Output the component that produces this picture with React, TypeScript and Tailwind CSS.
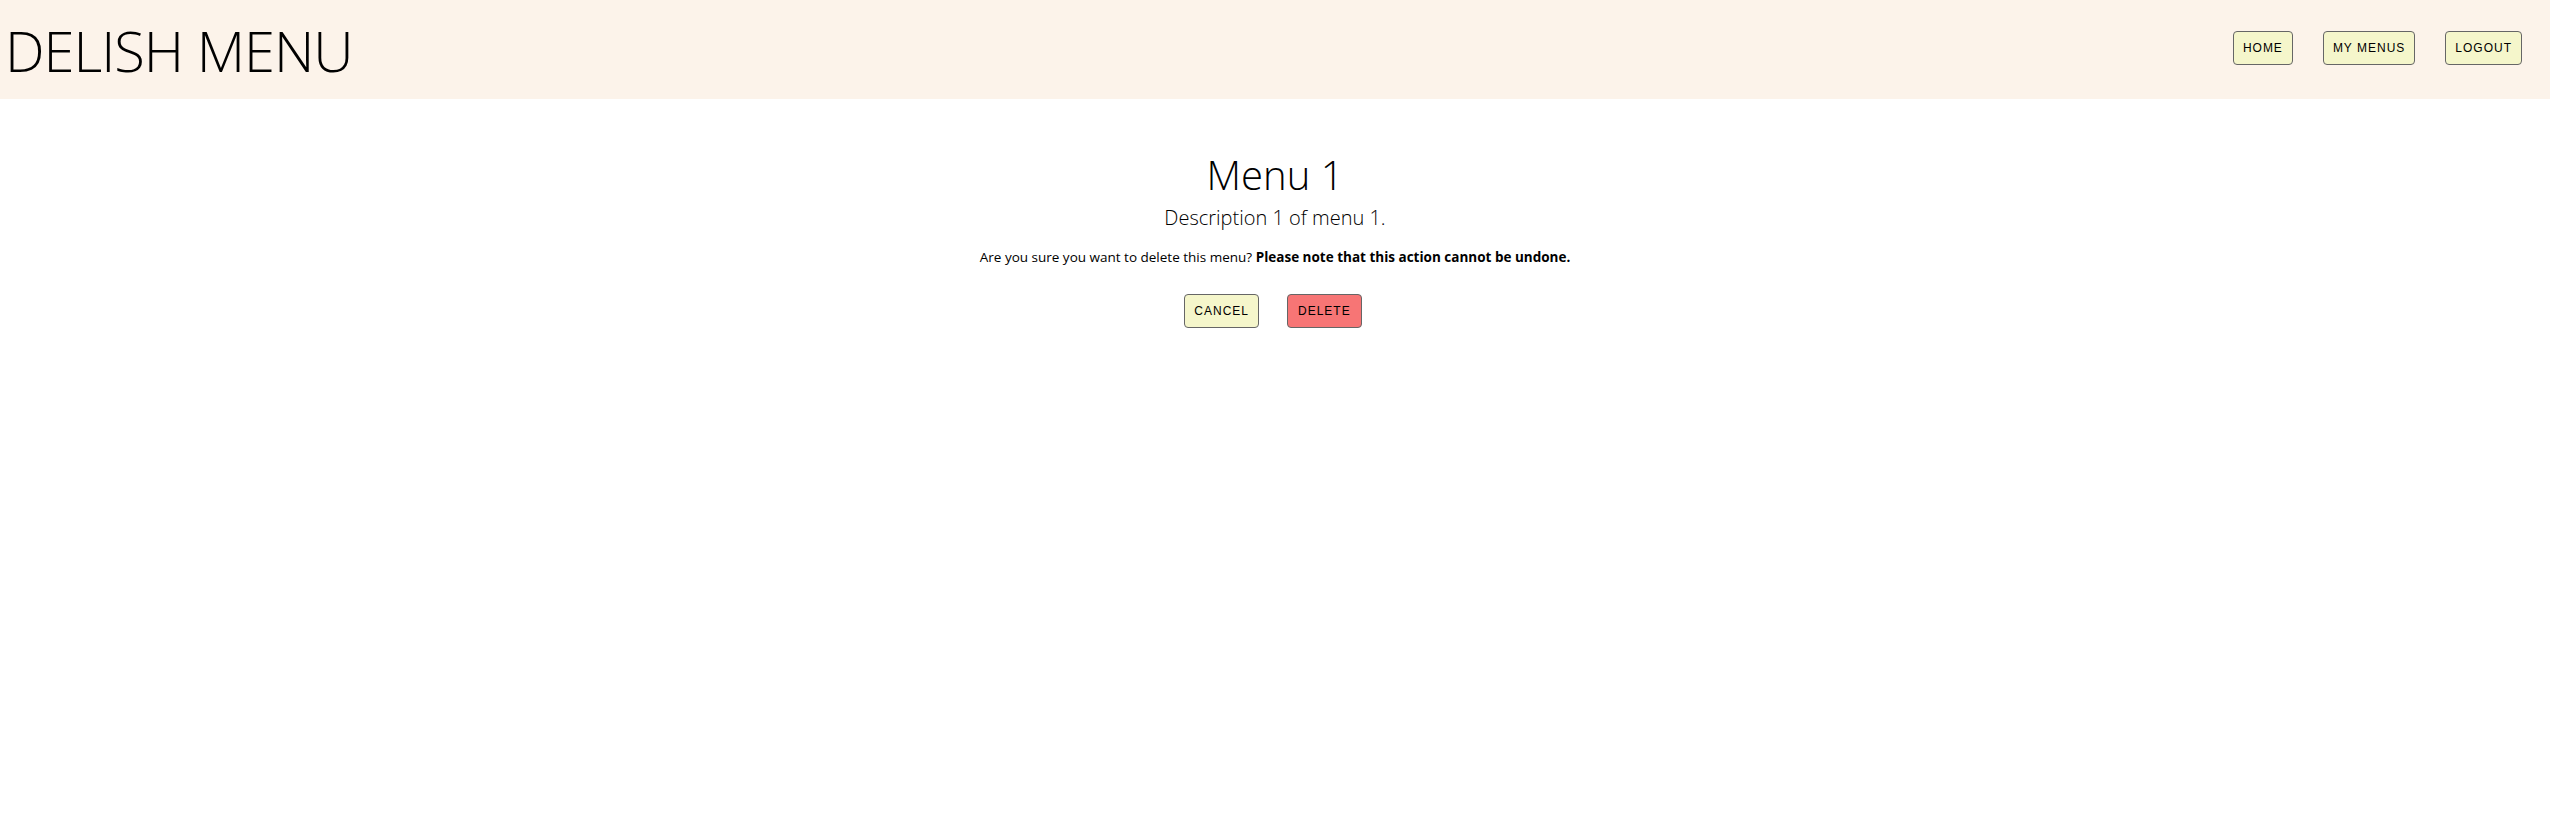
import React from 'react';

const navLinks = ['Home', 'My Menus', 'Logout'];

function NavButton({ label, danger }: { label: string; danger?: boolean }) {
  return (
    <button
      className={`h-[34px] px-[9px] rounded-[4px] border border-[#666] uppercase text-[12px] tracking-[1px] text-black font-['Liberation_Sans',Arial,sans-serif] ${
        danger ? 'bg-[#f77575] px-[10px]' : 'bg-[#f5f6cb]'
      }`}
    >
      {label}
    </button>
  );
}

export default function App() {
  return (
    <div className="min-h-screen bg-white font-['Open_Sans',sans-serif] text-black">
      <header className="h-[99px] bg-[#fcf3ea] flex items-center justify-between pl-[5px] pr-[28px]">
        <h1 className="text-[56px] font-light leading-none tracking-[-1px]">DELISH MENU</h1>
        <nav className="flex gap-[30px] -mt-[3px]">
          {navLinks.map(l => (
            <NavButton key={l} label={l} />
          ))}
        </nav>
      </header>

      <main className="flex flex-col items-center pt-[49px]">
        <h2 className="text-[40px] font-light leading-[54px]">Menu 1</h2>
        <p className="mt-[2px] text-[20px] font-light leading-[28px]">Description 1 of menu 1.</p>
        <p className="mt-[15px] text-[13.5px] leading-[20px]">
          Are you sure you want to delete this menu? <strong className="font-bold">Please note that this action cannot be undone.</strong>
        </p>
        <div className="flex gap-[28px] mt-[27px] -ml-[4px]">
          <NavButton label="Cancel" />
          <NavButton label="Delete" danger />
        </div>
      </main>
    </div>
  );
}
